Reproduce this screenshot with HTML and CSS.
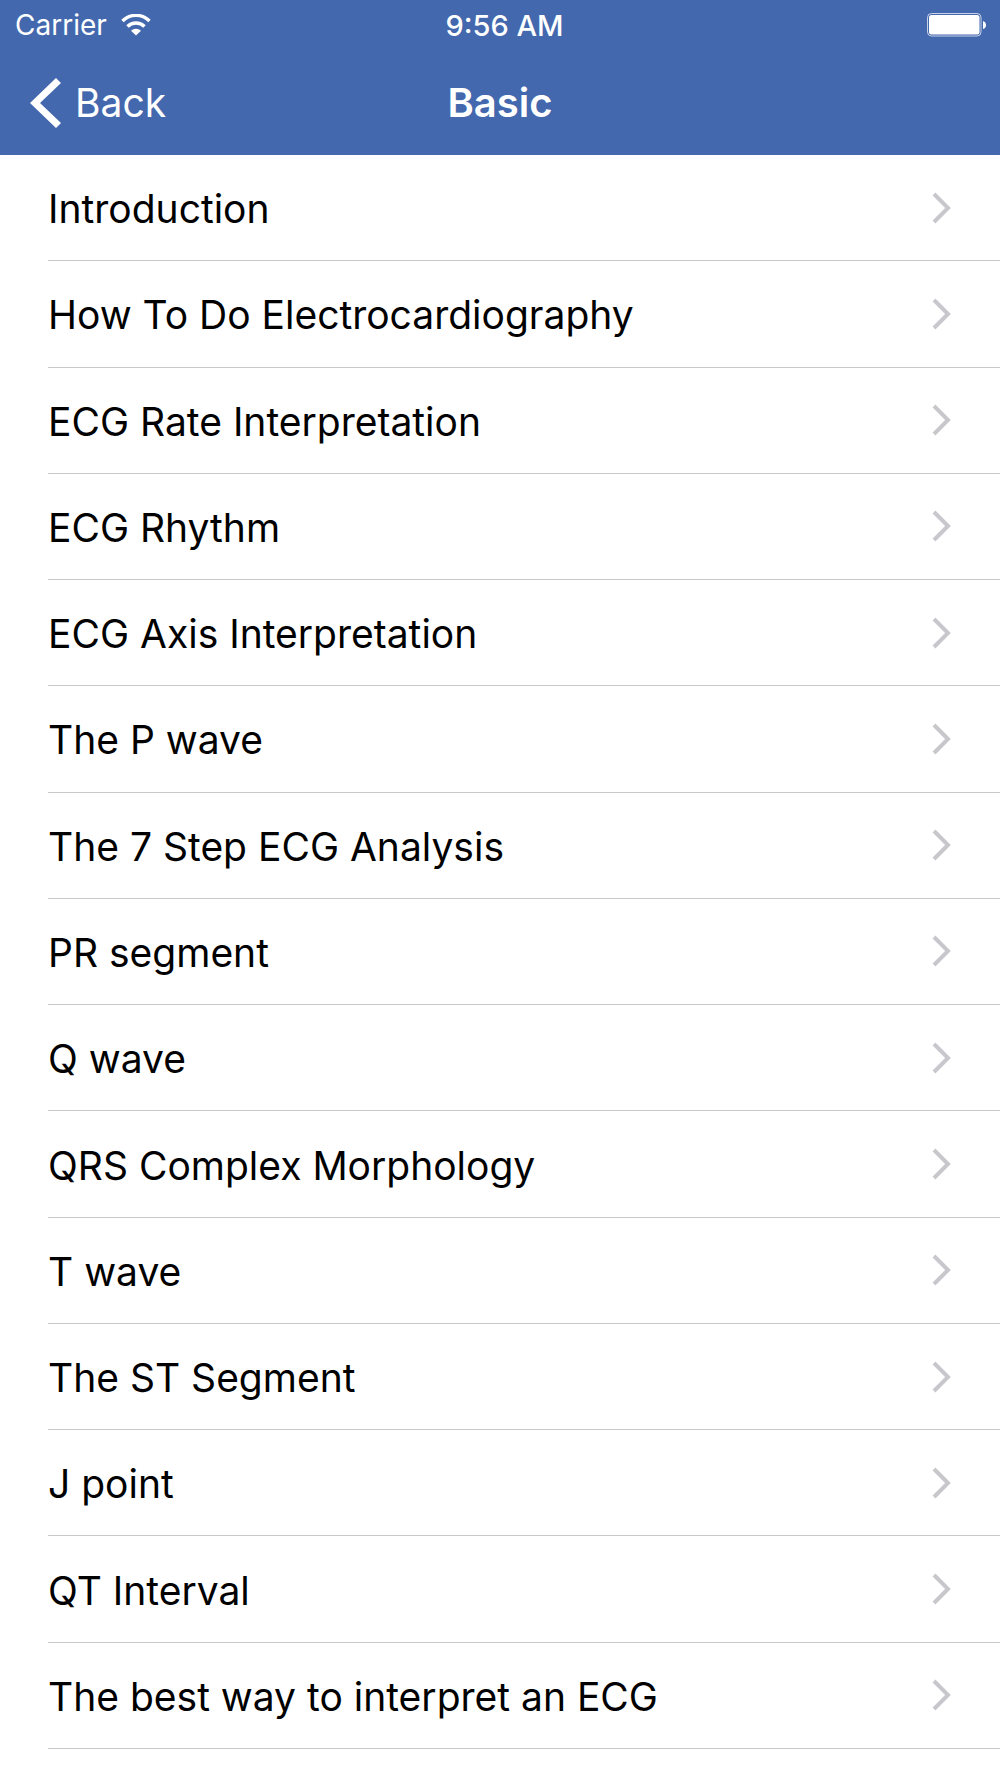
FILE: index.html
```html
<!DOCTYPE html>
<html lang="en">
<head>
<meta charset="utf-8">
<meta name="viewport" content="width=device-width, initial-scale=1">
<title>Basic</title>
<link rel="stylesheet" href="styles.css">
</head>
<body>
<svg class="symbols" aria-hidden="true"><symbol id="chevron" viewBox="0 0 20 32"><path d="M2 2l14 14L2 30" fill="none" stroke="#c7c7cc" stroke-width="4"/></symbol></svg>
<header class="header">
  <div class="status">
    <div class="carrier"><span>Carrier</span>
      <svg class="wifi" viewBox="0 0 30 22" aria-hidden="true"><path d="M1.500 7a19 19 0 0 1 27 0M6.500 12.500a12 12 0 0 1 17 0" fill="none" stroke="currentColor" stroke-width="3.400"/><path d="M10 16.800a7 7 0 0 1 10 0l-5 4.800z" fill="currentColor"/></svg>
    </div>
    <span class="time">9:56 AM</span>
    <svg class="battery" viewBox="0 0 59 24" aria-hidden="true"><rect x=".5" y=".5" width="53.500" height="22.500" rx="4" fill="none" stroke="currentColor" opacity=".7"/><rect x="2" y="2" width="50.500" height="19.500" rx="2.500" fill="currentColor"/><path d="M56 8q3 1 3 4t-3 4z" fill="currentColor"/></svg>
  </div>
  <nav class="navbar">
    <a class="back" href="#"><svg class="back-icon" viewBox="0 0 32 52" aria-hidden="true"><path d="M27 1l5 5L11 26l21 20-5 5L1 26z" fill="currentColor"/></svg><span>Back</span></a>
    <h1 class="title">Basic</h1>
  </nav>
</header>
<main class="content">
  <ul class="list">
    <li class="item"><a class="row" href="#"><span class="label">Introduction</span><svg class="chevron" aria-hidden="true"><use href="#chevron"/></svg></a></li>
    <li class="item"><a class="row" href="#"><span class="label">How To Do Electrocardiography</span><svg class="chevron" aria-hidden="true"><use href="#chevron"/></svg></a></li>
    <li class="item"><a class="row" href="#"><span class="label">ECG Rate Interpretation</span><svg class="chevron" aria-hidden="true"><use href="#chevron"/></svg></a></li>
    <li class="item"><a class="row" href="#"><span class="label">ECG Rhythm</span><svg class="chevron" aria-hidden="true"><use href="#chevron"/></svg></a></li>
    <li class="item"><a class="row" href="#"><span class="label">ECG Axis Interpretation</span><svg class="chevron" aria-hidden="true"><use href="#chevron"/></svg></a></li>
    <li class="item"><a class="row" href="#"><span class="label">The P wave</span><svg class="chevron" aria-hidden="true"><use href="#chevron"/></svg></a></li>
    <li class="item"><a class="row" href="#"><span class="label">The 7 Step ECG Analysis</span><svg class="chevron" aria-hidden="true"><use href="#chevron"/></svg></a></li>
    <li class="item"><a class="row" href="#"><span class="label">PR segment</span><svg class="chevron" aria-hidden="true"><use href="#chevron"/></svg></a></li>
    <li class="item"><a class="row" href="#"><span class="label">Q wave</span><svg class="chevron" aria-hidden="true"><use href="#chevron"/></svg></a></li>
    <li class="item"><a class="row" href="#"><span class="label">QRS Complex Morphology</span><svg class="chevron" aria-hidden="true"><use href="#chevron"/></svg></a></li>
    <li class="item"><a class="row" href="#"><span class="label">T wave</span><svg class="chevron" aria-hidden="true"><use href="#chevron"/></svg></a></li>
    <li class="item"><a class="row" href="#"><span class="label">The ST Segment</span><svg class="chevron" aria-hidden="true"><use href="#chevron"/></svg></a></li>
    <li class="item"><a class="row" href="#"><span class="label">J point</span><svg class="chevron" aria-hidden="true"><use href="#chevron"/></svg></a></li>
    <li class="item"><a class="row" href="#"><span class="label">QT Interval</span><svg class="chevron" aria-hidden="true"><use href="#chevron"/></svg></a></li>
    <li class="item"><a class="row" href="#"><span class="label">The best way to interpret an ECG</span><svg class="chevron" aria-hidden="true"><use href="#chevron"/></svg></a></li>
  </ul>
</main>
</body>
</html>
```
FILE: styles.css
```css
* { box-sizing: border-box; }

body {
  display: flex;
  flex-direction: column;
  min-height: 100vh;
  margin: 0;
  background: #fff;
  color: #000;
  font-family: Inter, "Liberation Sans", sans-serif;
}

.symbols { display: none; }

/* Header */
.header { background: #4368ae; color: #fff; }

.status {
  display: grid;
  grid-template-columns: 1fr auto 1fr;
  align-items: center;
  height: 50px;
  padding: 0 14px 0 15px;
  font-size: 28px;
}

.carrier { display: flex; align-items: center; gap: 14px; }
.wifi { width: 30px; height: 22px; }
.time { padding-left: 8px; font-size: 29px; font-weight: 500; }
.battery { width: 59px; height: 24px; justify-self: end; }

.navbar {
  display: grid;
  grid-template-columns: 1fr auto 1fr;
  align-items: center;
  height: 105px;
  padding: 0 29px;
}

.back {
  display: flex;
  align-items: center;
  justify-self: start;
  gap: 14px;
  color: inherit;
  font-size: 39px;
  text-decoration: none;
}

.back-icon { width: 32px; height: 52px; }
.title { margin: 0; font-size: 40px; font-weight: 600; }

/* Topic list */
.content { display: flex; flex: 1; }

.list {
  display: grid;
  flex: 1;
  grid-auto-rows: 1fr;
  margin: 0;
  padding: 0 0 29px 48px;
  list-style: none;
}

.item { display: grid; border-bottom: 1px solid #c8c7cc; }

.row {
  display: flex;
  align-items: center;
  justify-content: space-between;
  min-height: 88px;
  padding-right: 48px;
  color: inherit;
  font-size: 39px;
  text-decoration: none;
}

.label { padding-top: 2px; }
.chevron { flex: none; width: 20px; height: 32px; }
```
